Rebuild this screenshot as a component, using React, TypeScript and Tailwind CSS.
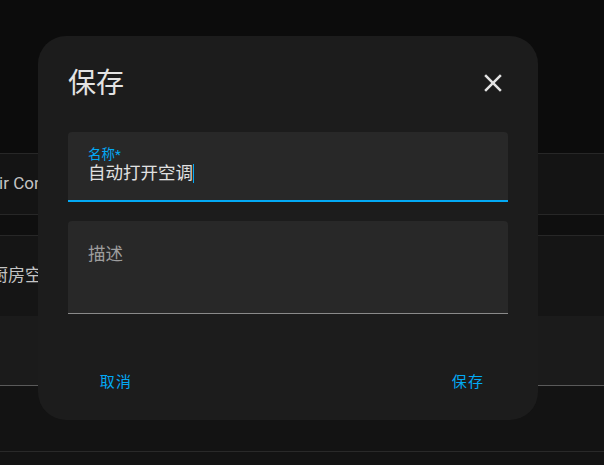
const font = "font-['Roboto','Noto_Sans_CJK_SC',sans-serif]";

function CloseIcon() {
  return (
    <svg viewBox="0 0 24 24" className="w-[30px] h-[30px]" fill="currentColor">
      <path d="M19,6.41L17.59,5L12,10.59L6.41,5L5,6.41L10.59,12L5,17.59L6.41,19L12,13.41L17.59,19L19,17.59L13.41,12L19,6.41Z" />
    </svg>
  );
}

function Backdrop() {
  return (
    <div className="flex flex-col w-full h-[465px] overflow-hidden">
      <div className="h-[153px] bg-[#0c0c0c] shrink-0" />
      <div className="h-[62px] shrink-0 bg-[#141414] border-y border-[#272727] flex items-center">
        <span className="ml-[-12px] text-[17px] text-[#c4c4c4] whitespace-nowrap">Air Conditioner</span>
      </div>
      <div className="h-[20px] shrink-0 bg-[#0f0f0f]" />
      <div className="h-[81px] shrink-0 bg-[#151515] border-t border-[#272727] flex items-center">
        <span className="ml-[-9px] text-[17px] text-[#c4c4c4] whitespace-nowrap">厨房空调</span>
      </div>
      <div className="h-[70px] shrink-0 bg-[#1b1b1b] border-b border-[#5a5a5a]" />
      <div className="h-[66px] shrink-0 bg-[#131313] border-b border-[#292929]" />
      <div className="flex-1 bg-[#131313]" />
    </div>
  );
}

export default function App() {
  return (
    <div className={`relative w-[604px] h-[465px] overflow-hidden ${font}`}>
      <Backdrop />
      <div className="absolute left-[38px] top-[36px] w-[500px] h-[384px] rounded-[28px] bg-[#1c1c1c] flex flex-col px-[30px] pt-[32px] pb-5">
        <div className="flex items-center justify-between h-[30px]">
          <h2 className="text-[28px] leading-[30px] text-[#e3e3e3] translate-y-[1px]">保存</h2>
          <div className="text-[#e3e3e3]">
            <CloseIcon />
          </div>
        </div>

        <div className="mt-[34px] h-[70px] bg-[#282828] rounded-t-[4px] border-b-2 border-[#03a9f4] px-5 pt-[15px] flex flex-col">
          <span className="text-[13.5px] leading-[14px] text-[#03a9f4]">名称*</span>
          <div className="flex items-center mt-[1px] h-[22px]">
            <span className="text-[17.5px] leading-[22px] text-[#e1e1e1]">自动打开空调</span>
            <span className="w-px h-[19px] bg-[#03a9f4]" />
          </div>
        </div>

        <div className="mt-[19px] h-[93px] bg-[#282828] rounded-t-[4px] border-b border-[#8a8a8a] px-5 pt-[22px]">
          <span className="text-[17.5px] leading-[22px] text-[#9e9e9e]">描述</span>
        </div>

        <div className="mt-auto flex justify-between pl-[16px] pr-[8px]">
          <button className="h-9 min-w-16 px-2 text-[15px] tracking-[0.08em] text-[#03a9f4]">取消</button>
          <button className="h-9 min-w-16 px-2 text-[15px] tracking-[0.08em] text-[#03a9f4]">保存</button>
        </div>
      </div>
    </div>
  );
}
